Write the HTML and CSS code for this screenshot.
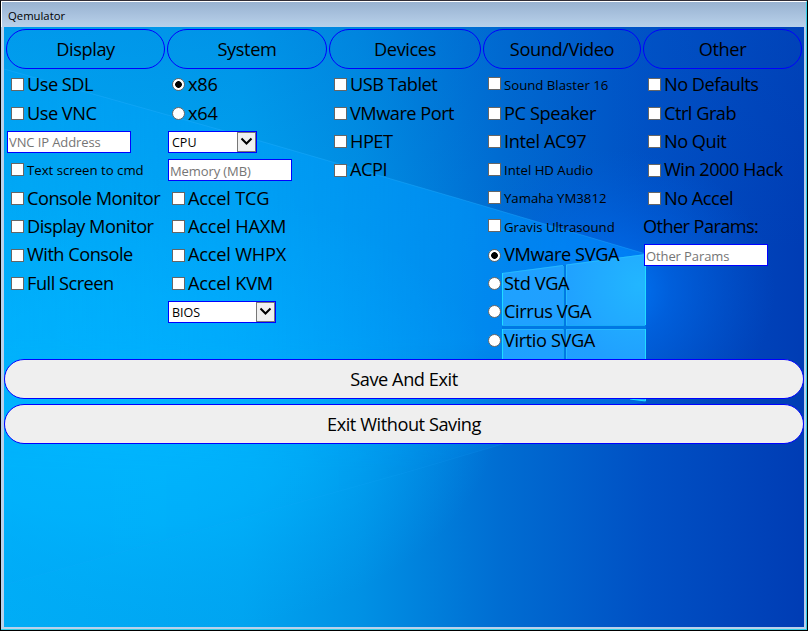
FILE: index.html
```html
<!DOCTYPE html>
<html lang="en">
<head>
<meta charset="utf-8">
<title>Qemulator</title>
<link rel="stylesheet" href="styles.css">
</head>
<body>
<div class="window">
  <header class="titlebar">Qemulator</header>
  <main class="content">
    <svg class="wallpaper" viewBox="4 27 800 600" aria-hidden="true">
      <defs>
        <linearGradient id="base" gradientUnits="userSpaceOnUse" x1="0" y1="0" x2="808" y2="0">
          <stop offset="0" stop-color="#00adf6"/><stop offset=".3" stop-color="#00a4f0"/><stop offset=".45" stop-color="#0090e4"/><stop offset=".62" stop-color="#006dd2"/><stop offset=".8" stop-color="#0050c4"/><stop offset="1" stop-color="#003cb4"/>
        </linearGradient>
        <linearGradient id="shade" gradientUnits="userSpaceOnUse" x1="0" y1="27" x2="0" y2="250">
          <stop offset="0" stop-color="#0058c8" stop-opacity=".22"/><stop offset="1" stop-color="#0058c8" stop-opacity="0"/>
        </linearGradient>
        <radialGradient id="left" gradientUnits="userSpaceOnUse" cx="0" cy="0" r="1" gradientTransform="translate(130 410) scale(370 230)">
          <stop offset="0" stop-color="#00b8ff"/><stop offset=".5" stop-color="#00b6ff" stop-opacity=".6"/><stop offset="1" stop-color="#00a8fa" stop-opacity="0"/>
        </radialGradient>
        <radialGradient id="glow" gradientUnits="userSpaceOnUse" cx="0" cy="0" r="1" gradientTransform="translate(615 290) scale(160 140)">
          <stop offset="0" stop-color="#0080ff" stop-opacity=".9"/><stop offset=".35" stop-color="#0070f4" stop-opacity=".5"/><stop offset="1" stop-color="#0060e0" stop-opacity="0"/>
        </radialGradient>
        <linearGradient id="beam" gradientUnits="userSpaceOnUse" x1="0" y1="0" x2="646" y2="0">
          <stop offset="0" stop-color="#00a8ff" stop-opacity=".2"/><stop offset=".7" stop-color="#009cff" stop-opacity=".6"/><stop offset="1" stop-color="#008aff" stop-opacity=".65"/>
        </linearGradient>
        <linearGradient id="fade" gradientUnits="userSpaceOnUse" x1="0" y1="250" x2="0" y2="470">
          <stop offset="0" stop-color="#fff"/><stop offset=".4" stop-color="#fff"/><stop offset="1" stop-color="#fff" stop-opacity=".05"/>
        </linearGradient>
        <mask id="fadeout"><rect x="4" y="27" width="800" height="600" fill="url(#fade)"/></mask>
        <radialGradient id="pane" gradientUnits="userSpaceOnUse" cx="640" cy="285" r="160">
          <stop offset="0" stop-color="#22b6ff"/><stop offset=".5" stop-color="#20a0ff"/><stop offset="1" stop-color="#1ea2ff"/>
        </radialGradient>
      </defs>
      <rect x="4" y="27" width="800" height="600" fill="url(#base)"/>
      <rect x="4" y="27" width="800" height="223" fill="url(#shade)"/>
      <rect x="4" y="27" width="800" height="600" fill="url(#left)"/>
      <rect x="4" y="27" width="800" height="600" fill="url(#glow)"/>
      <path d="M4 69L260 141L460 199L646 254V401L500 445L4 585Z" fill="url(#beam)" mask="url(#fadeout)"/>
      <path d="M4 69L260 141L460 199L646 254" fill="none" stroke="#22b0ff" stroke-opacity=".4"/>
      <path d="M4 585L404 473L646 402" fill="none" stroke="#1ea8ff" stroke-opacity=".15"/>
      <path d="M502 273L563 265V325H502ZM566 264.500L646 254V325H566ZM502 329H563V390L502 381ZM566 329H646V401L566 390Z" fill="url(#pane)"/>
      <path d="M563 265H566V359H563ZM502 325.500H646V329H502Z" fill="#0078e4"/>
      <path d="M502.500 325V273.500L563 265.500M566.500 325V265L645.500 254.500V325M502 325.500H563.500V266M566 325.500H645M502.500 381V329.500H563.500V389M566.500 389V329.500H645.500V400.500L566 390" fill="none" stroke="#28c8ff" stroke-opacity=".6"/>
      <path d="M502.500 273V325M502.500 329V360M645.500 254V325M645.500 329V401L630 399" fill="none" stroke="#20dcff"/>
    </svg>
    <form class="form">
      <div class="columns">
        <section class="column">
          <h2 class="heading">Display</h2>
          <label class="row"><input class="box" type="checkbox"><span>Use SDL</span></label>
          <label class="row"><input class="box" type="checkbox"><span>Use VNC</span></label>
          <div class="row field"><input class="text" type="text" placeholder="VNC IP Address"></div>
          <label class="row small"><input class="box" type="checkbox"><span>Text screen to cmd</span></label>
          <label class="row"><input class="box" type="checkbox"><span>Console Monitor</span></label>
          <label class="row"><input class="box" type="checkbox"><span>Display Monitor</span></label>
          <label class="row"><input class="box" type="checkbox"><span>With Console</span></label>
          <label class="row"><input class="box" type="checkbox"><span>Full Screen</span></label>
        </section>
        <section class="column system">
          <h2 class="heading">System</h2>
          <label class="row"><input class="box radio" type="radio" name="arch" checked><span>x86</span></label>
          <label class="row"><input class="box radio" type="radio" name="arch"><span>x64</span></label>
          <div class="row field"><div class="select cpu"><select><option>CPU</option></select><span class="arrow"><svg viewBox="0 0 17 18"><path d="M3.500 5.500L8.500 10.500L13.500 5.500"/></svg></span></div></div>
          <div class="row field"><input class="text" type="text" placeholder="Memory (MB)"></div>
          <label class="row"><input class="box" type="checkbox"><span>Accel TCG</span></label>
          <label class="row"><input class="box" type="checkbox"><span>Accel HAXM</span></label>
          <label class="row"><input class="box" type="checkbox"><span>Accel WHPX</span></label>
          <label class="row"><input class="box" type="checkbox"><span>Accel KVM</span></label>
          <div class="row field"><div class="select bios"><select><option>BIOS</option></select><span class="arrow"><svg viewBox="0 0 17 18"><path d="M3.500 5.500L8.500 10.500L13.500 5.500"/></svg></span></div></div>
        </section>
        <section class="column">
          <h2 class="heading">Devices</h2>
          <label class="row"><input class="box" type="checkbox"><span>USB Tablet</span></label>
          <label class="row"><input class="box" type="checkbox"><span>VMware Port</span></label>
          <label class="row"><input class="box" type="checkbox"><span>HPET</span></label>
          <label class="row"><input class="box" type="checkbox"><span>ACPI</span></label>
        </section>
        <section class="column video">
          <h2 class="heading">Sound/Video</h2>
          <label class="row small"><input class="box" type="checkbox"><span>Sound Blaster 16</span></label>
          <label class="row"><input class="box" type="checkbox"><span>PC Speaker</span></label>
          <label class="row"><input class="box" type="checkbox"><span>Intel AC97</span></label>
          <label class="row small"><input class="box" type="checkbox"><span>Intel HD Audio</span></label>
          <label class="row small"><input class="box" type="checkbox"><span>Yamaha YM3812</span></label>
          <label class="row small"><input class="box" type="checkbox"><span>Gravis Ultrasound</span></label>
          <label class="row"><input class="box radio" type="radio" name="vga" checked><span>VMware SVGA</span></label>
          <label class="row"><input class="box radio" type="radio" name="vga"><span>Std VGA</span></label>
          <label class="row"><input class="box radio" type="radio" name="vga"><span>Cirrus VGA</span></label>
          <label class="row"><input class="box radio" type="radio" name="vga"><span>Virtio SVGA</span></label>
        </section>
        <section class="column">
          <h2 class="heading">Other</h2>
          <label class="row"><input class="box" type="checkbox"><span>No Defaults</span></label>
          <label class="row"><input class="box" type="checkbox"><span>Ctrl Grab</span></label>
          <label class="row"><input class="box" type="checkbox"><span>No Quit</span></label>
          <label class="row"><input class="box" type="checkbox"><span>Win 2000 Hack</span></label>
          <label class="row"><input class="box" type="checkbox"><span>No Accel</span></label>
          <div class="row caption"><span>Other Params:</span></div>
          <div class="row field"><input class="text" type="text" placeholder="Other Params"></div>
        </section>
      </div>
      <button class="action" type="button">Save And Exit</button>
      <button class="action" type="button">Exit Without Saving</button>
    </form>
  </main>
</div>
</body>
</html>
```

FILE: styles.css
```css
* { box-sizing: border-box; }

body {
  margin: 0;
  background: #000;
  overflow: hidden;
  font-family: "Open Sans", "Noto Sans", sans-serif;
  color: #000;
}

.window {
  width: 808px;
  height: 631px;
  border: 1px solid #000;
  border-top-color: #302c36;
  display: flex;
  flex-direction: column;
}

.titlebar {
  height: 26px;
  flex: none;
  border-top: 1px solid #fff;
  border-left: 1px solid #fff;
  border-right: 1px solid #30cfe8;
  padding: 2px 0 0 6px;
  background: linear-gradient(#98b2d1, #b9d1ea);
  font-size: 11.3px;
  line-height: 23px;
  color: #000;
}

.content {
  position: relative;
  flex: 1;
  border: solid #b9d1ea;
  border-width: 0 2px 2px 3px;
  margin: 0 1px 1px 0;
}

.content::after {
  content: "";
  position: absolute;
  inset: 0 -3px -3px -3px;
  border: solid #30cfe8;
  border-width: 0 1px 1px 0;
}

.wallpaper {
  position: absolute;
  inset: 0;
  width: 800px;
  height: 600px;
}

.form {
  position: relative;
  z-index: 1;
  padding-top: 2px;
}

.columns {
  display: grid;
  grid-template-columns: 159px 160px 152px 158px 159px;
  column-gap: 2px;
  padding-left: 2px;
  height: 330px;
}

.heading {
  height: 40px;
  margin: 0 0 1.8px;
  border: 1px solid #00f;
  border-radius: 20px;
  font-size: 18.2px;
  font-weight: 400;
  line-height: 39px;
  letter-spacing: -.4px;
  text-align: center;
}

.row {
  display: flex;
  align-items: center;
  height: 28.36px;
  padding-left: 5px;
  font-size: 18.2px;
  line-height: 28px;
  letter-spacing: -.5px;
  white-space: nowrap;
}

.row span { margin-top: -1.4px; }

.system .row { letter-spacing: -.2px; }
.video .row { letter-spacing: -.38px; }

.row.small {
  font-size: 13.2px;
  letter-spacing: 0;
}

.small .box { margin-bottom: 2px; }
.row.small span { margin-top: 0; }
.caption { padding-left: 0; letter-spacing: -.6px; }
.field { padding-left: 1px; }

.box {
  appearance: none;
  width: 13px;
  height: 13px;
  margin: 0 3px 0 0;
  border: 1px solid #666;
  background: #fff;
  flex: none;
}

.radio { border-radius: 50%; }
.radio:checked { background: radial-gradient(circle, #000 3px, #fff 3.7px); }

.text {
  width: 124px;
  height: 22px;
  border: 1px solid #00f;
  padding: 1px 1px 0;
  background: #fff;
  font: 13px "Open Sans", sans-serif;
  letter-spacing: -.1px;
}

.text::placeholder { color: #757575; opacity: 1; }

.select {
  display: flex;
  height: 22px;
  border: 1px solid #00f;
  background: #fff;
}

.cpu { width: 89px; }
.bios { width: 108px; }

.select select {
  appearance: none;
  flex: 1;
  min-width: 0;
  border: 0;
  padding: 1px 0 0 3px;
  background: none;
  font: 12.5px "Open Sans", sans-serif;
  color: #000;
}

.select .arrow {
  width: 19px;
  margin: 0;
  border: 1px solid #777;
  background: #f0f0f0;
}

.arrow svg {
  display: block;
  width: 17px;
  height: 18px;
  fill: none;
  stroke: #000;
  stroke-width: 2;
}

.action {
  display: block;
  width: 800px;
  height: 40px;
  margin: 0 0 5px;
  padding: 0 0 1px;
  border: 1px solid #00f;
  border-radius: 20px;
  background: #efefef;
  font: 18.2px "Open Sans", sans-serif;
  letter-spacing: -.45px;
  color: #000;
}
```
